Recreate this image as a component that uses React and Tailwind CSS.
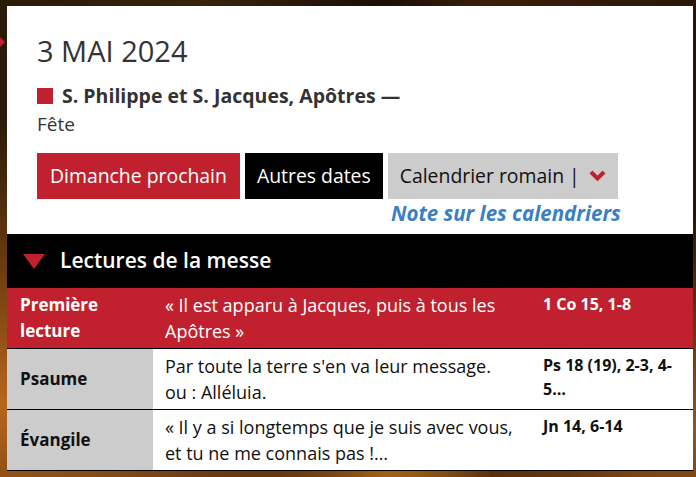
import React from "react";

const readings = [
	{
		label: "Première lecture",
		text: ["« Il est apparu à Jacques, puis à tous les Apôtres »"],
		ref: "1 Co 15, 1-8",
		active: true,
	},
	{
		label: "Psaume",
		text: ["Par toute la terre s'en va leur message.", "ou : Alléluia."],
		ref: "Ps 18 (19), 2-3, 4-5…",
	},
	{
		label: "Évangile",
		text: ["« Il y a si longtemps que je suis avec vous, et tu ne me connais pas !…"],
		ref: "Jn 14, 6-14",
	},
];

const ReadingRow = ({ reading }) => {
	const active = reading.active;
	return (
		<div
			className={`grid grid-cols-[146px_377px_1fr] border-b border-black ${
				active ? "bg-[#c1212e] text-white" : "bg-white text-[#111]"
			}`}
		>
			<div
				className={`flex py-[4px] pl-[13px] pr-2 text-[17px] font-bold leading-[26px] ${
					active ? "items-start" : "items-center bg-[#cccccc]"
				}`}
			>
				{reading.label}
			</div>
			<div className="py-[4px] pl-3 pr-[14px] text-[18px] leading-[26px]">
				{reading.text.map((line) => (
					<p key={line}>{line}</p>
				))}
			</div>
			<div className="pt-[4px] pb-[4px] pl-[13px] pr-3 text-[16px] font-bold leading-[24px]">
				{reading.ref}
			</div>
		</div>
	);
};

const App = () => {
	return (
		<div
			className="relative h-[477px] w-[696px] overflow-hidden pt-[6px] pl-[7px] bg-[radial-gradient(ellipse_at_0%_85%,#b8661c_0%,#6a3a10_25%,transparent_50%),radial-gradient(ellipse_at_55%_100%,#c8761e_0%,#5a300c_20%,transparent_45%),radial-gradient(ellipse_at_100%_90%,#9a5414_0%,transparent_35%),linear-gradient(90deg,#2a1a08,#3a220c_30%,#1a0e06_55%,#3c1e0a_70%,#2a1608)]"
			style={{ fontFamily: '"Open Sans", "Liberation Sans", sans-serif' }}
		>
			{/* partly hidden marker on the left edge */}
			<div className="absolute left-0 top-[37px] h-0 w-0 border-y-[5px] border-l-[5px] border-y-transparent border-l-[#c1212e]" />

			<div className="w-[686px]">
				<div className="bg-white px-[30px] pt-[27px] pb-[7px] text-[#333]">
					<h1 className="text-[29px] leading-[36px]">3 MAI 2024</h1>

					<div className="mt-[13px] flex items-center gap-[9px] text-[19.5px] font-bold leading-[28px]">
						<span className="h-[16px] w-[16px] bg-[#c1212e]" />
						<span>S. Philippe et S. Jacques, Apôtres —</span>
					</div>
					<p className="text-[19px] leading-[28px]">Fête</p>

					<div className="mt-[15px] flex gap-[5px] text-[19.4px]">
						<button className="h-[46px] bg-[#c1212e] px-[13px] text-white">
							Dimanche prochain
						</button>
						<button className="h-[46px] bg-black px-[12px] text-white">
							Autres dates
						</button>
						<div className="flex flex-col items-end">
							<button className="flex h-[46px] items-center gap-[9px] bg-[#cccccc] px-[12px] text-[#111]">
								<span>Calendrier romain |</span>
								<svg width="17" height="12" viewBox="0 0 17 12">
									<polyline
										points="2,2 8.5,8.5 15,2"
										fill="none"
										stroke="#c1212e"
										strokeWidth="4"
									/>
								</svg>
							</button>
							<a className="-mr-[3px] text-[20.5px] font-bold italic leading-[28px] text-[#3a7fc2]">
								Note sur les calendriers
							</a>
						</div>
					</div>
				</div>

				<div className="flex h-[54px] items-center gap-[15px] bg-black pl-[16px] text-white">
					<svg width="22" height="15" viewBox="0 0 22 15">
						<polygon points="0,0 22,0 11,15" fill="#c1212e" />
					</svg>
					<h2 className="text-[21px] font-semibold">Lectures de la messe</h2>
				</div>

				{readings.map((reading) => (
					<ReadingRow key={reading.label} reading={reading} />
				))}
			</div>
		</div>
	);
};

export default App;
